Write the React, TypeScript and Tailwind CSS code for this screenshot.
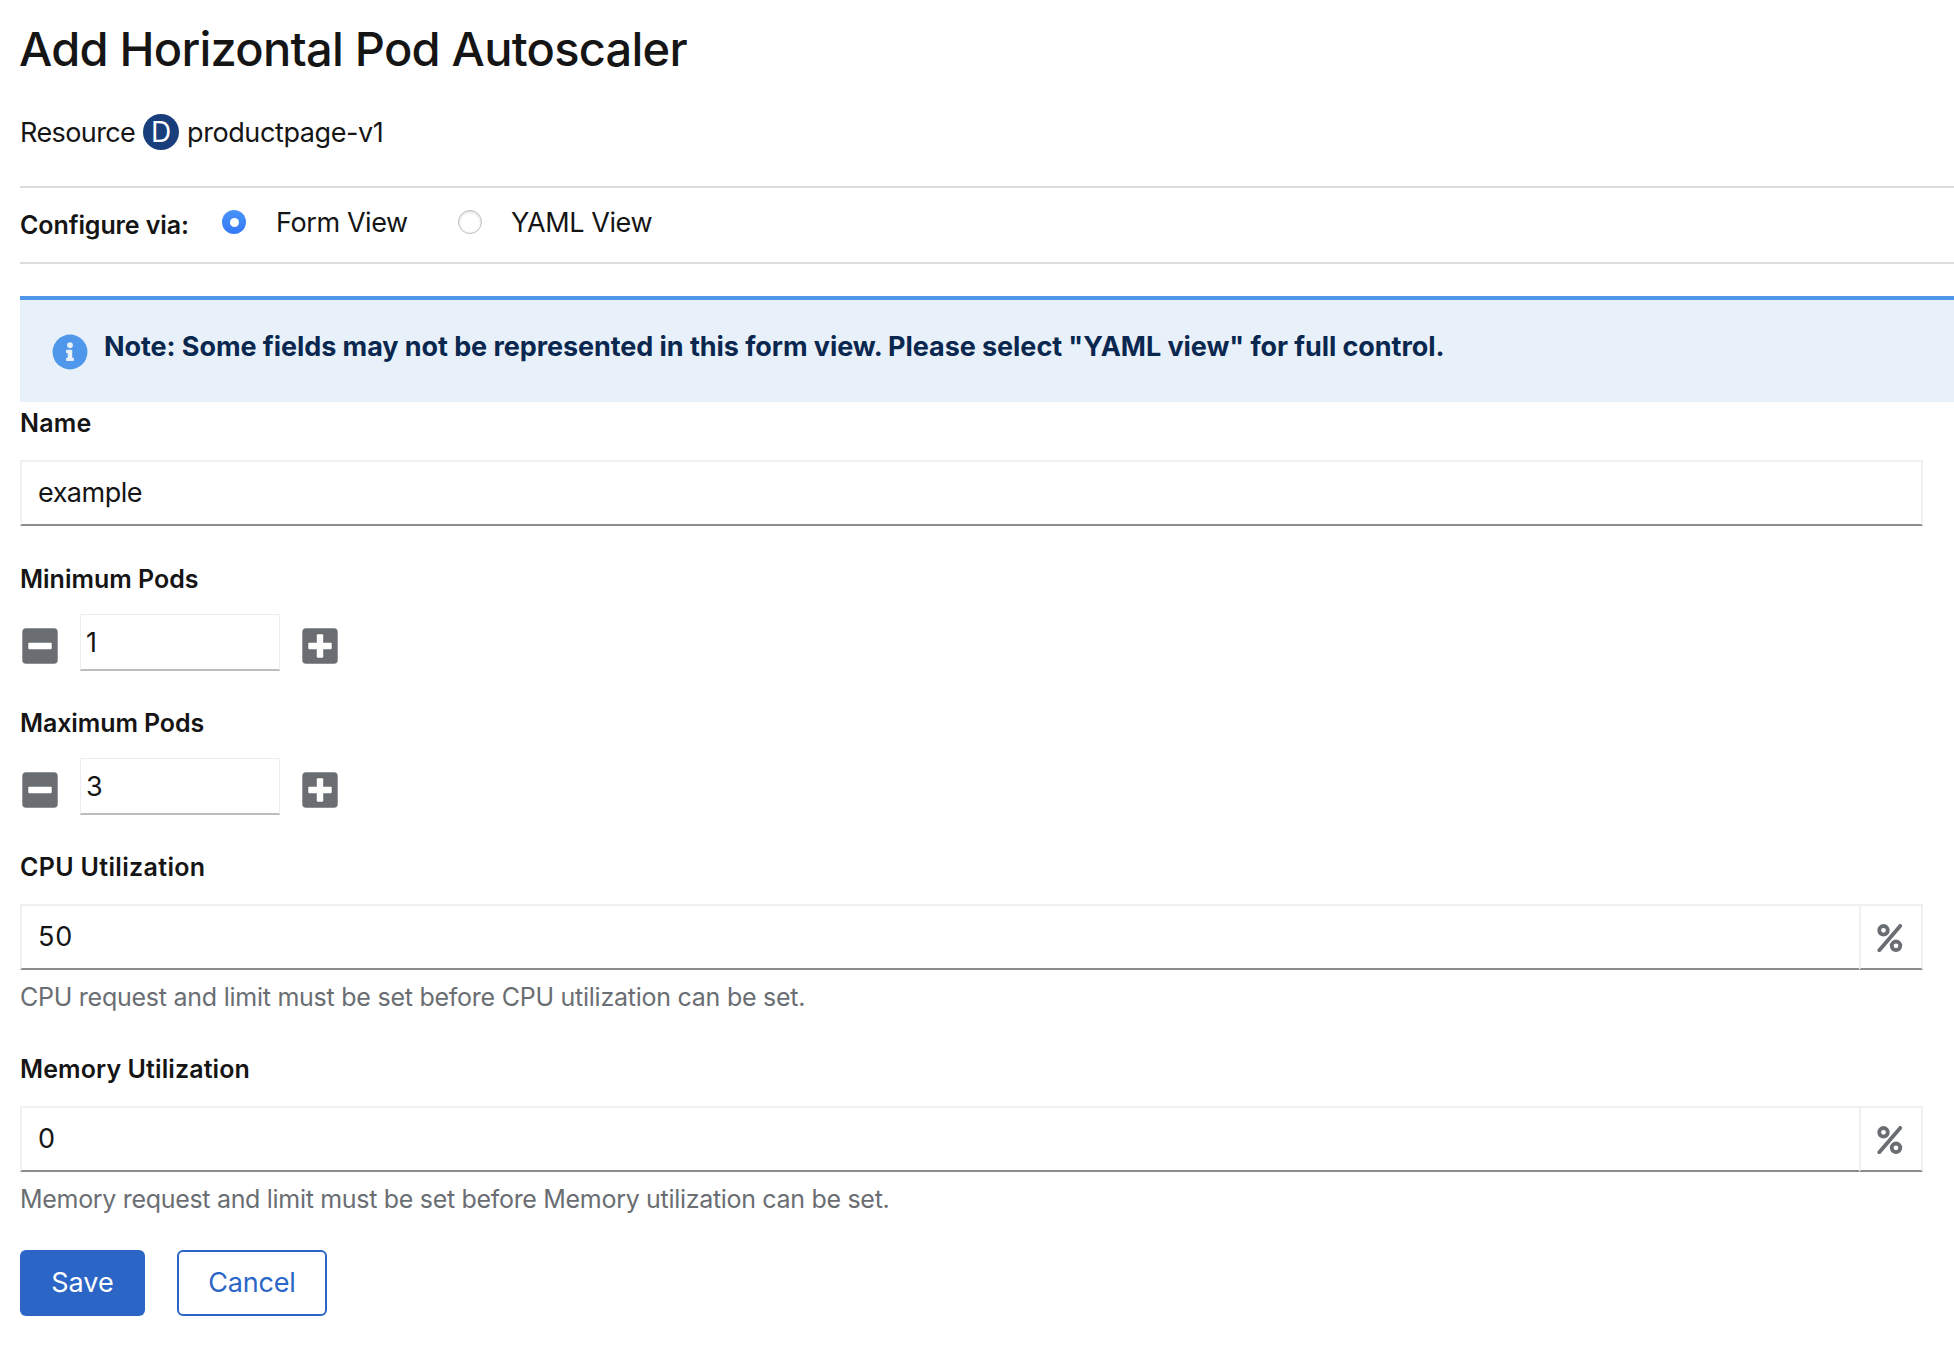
import React, { useState } from "react";

function Label({ children, className = "" }: { children: React.ReactNode; className?: string }) {
  return (
    <label className={`block h-10 w-fit text-[25px] leading-10 font-semibold whitespace-nowrap ${className}`}>
      {children}
    </label>
  );
}

function Radio({ checked }: { checked: boolean }) {
  return checked ? (
    <span className="flex size-6 items-center justify-center rounded-full bg-linear-to-b from-[#4a93f8] to-[#3478f6]">
      <span className="size-[9px] rounded-full bg-white" />
    </span>
  ) : (
    <span className="size-6 rounded-full border border-[#bdbdbd] bg-white shadow-[inset_0_1px_3px_rgba(0,0,0,0.16)]" />
  );
}

function StepIcon({ plus }: { plus?: boolean }) {
  return (
    <svg viewBox="0 0 36 36" className="size-9" aria-hidden="true">
      <rect x="0.3" y="0.3" width="35.4" height="35.4" rx="3.8" fill="#6a6e73" />
      <rect x="6.3" y="14.8" width="23.4" height="6.4" rx="1" fill="#fff" />
      {plus && <rect x="14.8" y="6.3" width="6.4" height="23.4" rx="1" fill="#fff" />}
    </svg>
  );
}

function Stepper({ initial }: { initial: number }) {
  const [value, setValue] = useState(initial);
  return (
    <div className="mt-[15px] flex h-[57px] items-center">
      <button type="button" aria-label="Decrement" className="mt-[7px] ml-0.5" onClick={() => setValue(value - 1)}>
        <StepIcon />
      </button>
      <div className="ml-[22px] flex h-[57px] w-[200px] items-center border border-b-2 border-[#ededed] border-b-[#bcbcbc] pt-0.5 pl-[5px] text-[27px]">
        {value}
      </div>
      <button type="button" aria-label="Increment" className="mt-[7px] ml-[22px]" onClick={() => setValue(value + 1)}>
        <StepIcon plus />
      </button>
    </div>
  );
}

function PercentIcon() {
  return (
    <svg viewBox="0 0 26 28" className="h-7 w-[26px]" fill="none" stroke="#6a6e73" strokeWidth="3.8" aria-hidden="true">
      <circle cx="6.5" cy="6.3" r="4.3" />
      <circle cx="19" cy="21.8" r="4.3" />
      <path d="M23.2 1.9 2.3 26.2" strokeLinecap="round" />
    </svg>
  );
}

function PercentInput({ value, className = "" }: { value: string; className?: string }) {
  return (
    <div className="mt-[17px] flex h-[66px] w-[1903px]">
      <div className={`flex flex-1 items-center border-2 border-r-0 border-[#f0f0f0] border-b-[#8a8d90] pl-4 text-[27px] ${className}`}>
        {value}
      </div>
      <div className="flex w-[64px] items-center border-2 border-[#f0f0f0] border-b-[#8a8d90] pt-0.5 pl-4">
        <PercentIcon />
      </div>
    </div>
  );
}

export default function App() {
  const [view, setView] = useState("form");
  return (
    <main className="h-[1350px] w-full overflow-hidden bg-white pt-[19px] pl-5 font-['Inter',sans-serif] text-[#151515]">
      <h1 className="-ml-px h-[60px] text-[47px] leading-[60px] font-medium tracking-[-0.75px] whitespace-nowrap">
        Add Horizontal Pod Autoscaler
      </h1>

      <div className="mt-[35px] flex h-9 items-center text-[27px] whitespace-nowrap">
        <span className="w-[123px] pt-0.5 tracking-[-0.6px]">Resource</span>
        <span className="flex size-9 items-center justify-center rounded-full bg-[#183f7c] text-[28px] text-white">D</span>
        <span className="ml-2 pt-0.5 tracking-[-0.4px]">productpage-v1</span>
      </div>

      <div className="mt-9 flex h-[78px] items-center border-y-2 border-[#dcdcdc] whitespace-nowrap">
        <span className="w-[202px] pt-0.5 text-[25px] font-semibold tracking-[-0.1px]">Configure via:</span>
        <div className="flex items-center pb-[6px] text-[27px]">
          <button type="button" className="flex w-[236px] items-center" onClick={() => setView("form")}>
            <Radio checked={view === "form"} />
            <span className="ml-[30px] pt-0.5 tracking-[-0.4px]">Form View</span>
          </button>
          <button type="button" className="flex items-center" onClick={() => setView("yaml")}>
            <Radio checked={view === "yaml"} />
            <span className="ml-[29px] pt-0.5 tracking-[-0.4px]">YAML View</span>
          </button>
        </div>
      </div>

      <div className="mt-8 flex h-[106px] items-start border-t-4 border-[#4f97ea] bg-[#e8f1f9] pl-8 text-[#0a2750]">
        <svg viewBox="0 0 512 512" className="mt-[34px] size-9 shrink-0" aria-hidden="true">
          <circle cx="256" cy="256" r="248" fill="#4f97ea" />
          <path
            fill="#e8f1f9"
            d="M256 118c23.2 0 42 18.8 42 42s-18.8 42-42 42-42-18.8-42-42 18.8-42 42-42zm56 254c0 6.600-5.400 12-12 12h-88c-6.600 0-12-5.400-12-12v-24c0-6.600 5.400-12 12-12h12v-64h-12c-6.600 0-12-5.400-12-12v-24c0-6.600 5.400-12 12-12h64c6.600 0 12 5.400 12 12v100h12c6.600 0 12 5.400 12 12v24z"
          />
        </svg>
        <span className="mt-[27px] ml-4 text-[27px] leading-10 font-bold tracking-[-0.07px] whitespace-nowrap">
          Note: Some fields may not be represented in this form view. Please select "YAML view" for full control.
        </span>
      </div>

      <Label className="mt-px tracking-[0.2px]">Name</Label>
      <div className="mt-[17px] flex h-[66px] w-[1903px] items-center border-2 border-[#f0f0f0] border-b-[#8a8d90] pl-4 text-[27px] tracking-[-0.5px]">
        example
      </div>

      <Label className="mt-[33px]">Minimum Pods</Label>
      <Stepper initial={1} />

      <Label className="mt-8 tracking-[-0.1px]">Maximum Pods</Label>
      <Stepper initial={3} />

      <Label className="mt-8 tracking-[0.33px]">CPU Utilization</Label>
      <PercentInput value="50" className="tracking-[0.8px]" />
      <p className="mt-[7px] h-10 text-[25px] leading-10 tracking-[-0.25px] whitespace-nowrap text-[#6a6e73]">
        CPU request and limit must be set before CPU utilization can be set.
      </p>

      <Label className="mt-8 tracking-[0.1px]">Memory Utilization</Label>
      <PercentInput value="0" />
      <p className="mt-[7px] h-10 text-[25px] leading-10 tracking-[-0.31px] whitespace-nowrap text-[#6a6e73]">
        Memory request and limit must be set before Memory utilization can be set.
      </p>

      <div className="mt-[31px] flex h-[66px] gap-8 text-[27px]">
        <button type="button" className="w-[125px] rounded-[6px] bg-[#2b66c7] text-white">
          Save
        </button>
        <button type="button" className="w-[150px] rounded-[6px] border-2 border-[#2b66c7] tracking-[-0.2px] text-[#2b66c7]">
          Cancel
        </button>
      </div>
    </main>
  );
}
